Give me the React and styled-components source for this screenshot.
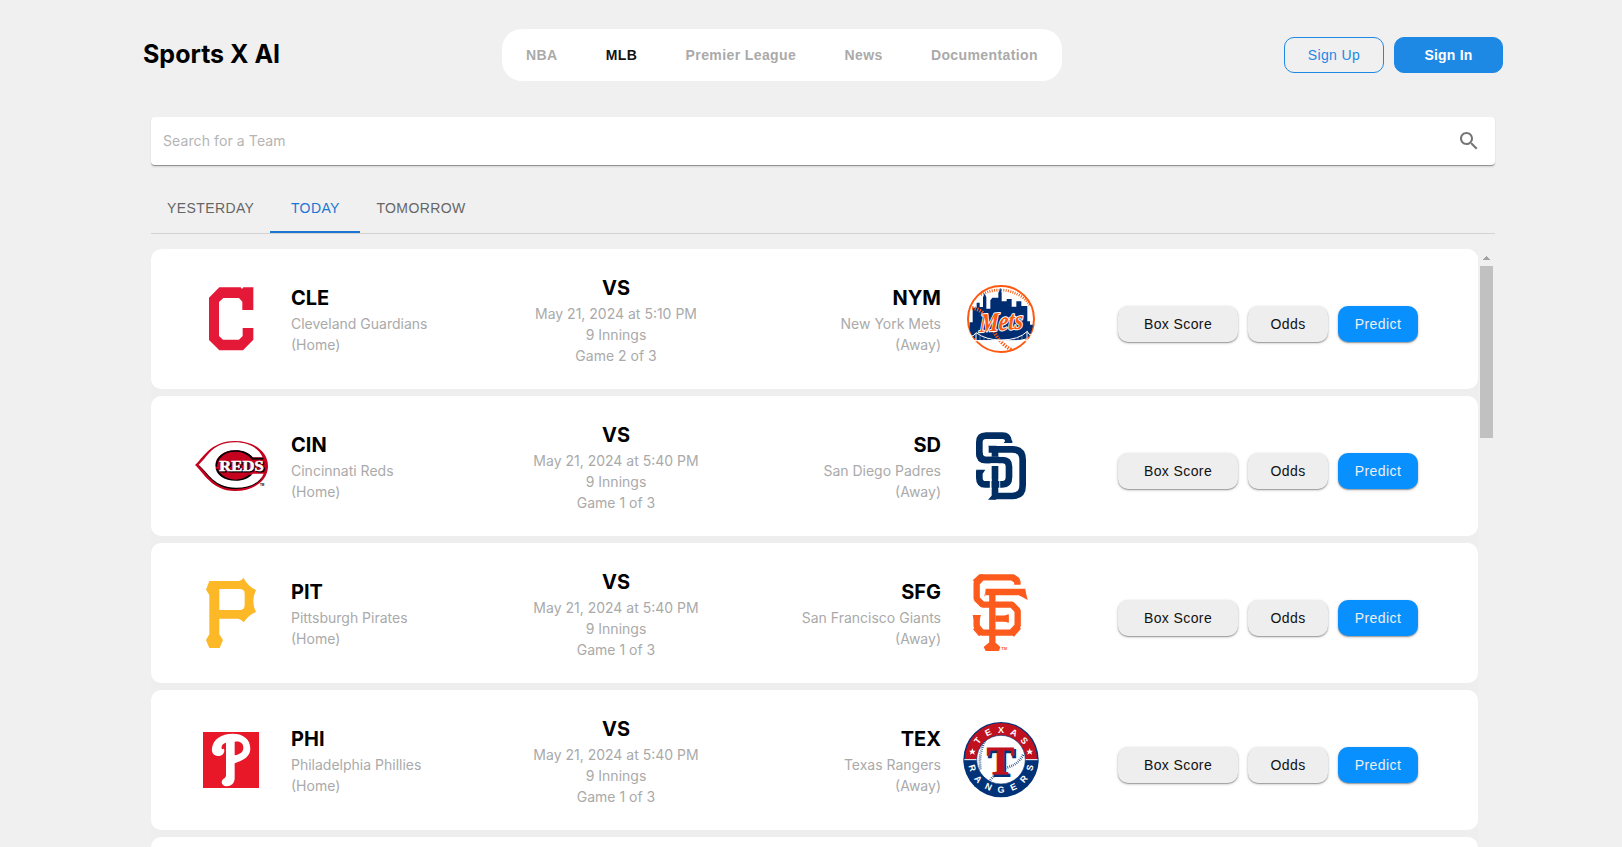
import React from "react";
import styled, { createGlobalStyle } from "styled-components";

const GlobalStyle = createGlobalStyle`
  * { box-sizing: border-box; }
  html, body { margin: 0; height: 100%; overflow: hidden; background: #f0f0f0; }
  button { font: inherit; letter-spacing: inherit; cursor: pointer; }
`;

const Page = styled.div`
  height: 100vh;
  padding-top: 29px;
  display: flex;
  flex-direction: column;
  overflow: hidden;
  font-family: "Liberation Sans", Arial, sans-serif;
  font-size: 14px;
  letter-spacing: 0.4px;
`;

const Header = styled.header`
  height: 52px;
  width: 1360px;
  margin-left: 143px;
  flex: none;
  display: grid;
  grid-template-columns: 359px 560px 1fr;
  align-items: center;
`;

const Brand = styled.h1`
  margin: 0;
  padding-bottom: 2px;
  font: 650 25px/36px Inter, sans-serif;
  letter-spacing: 0;
  color: #000;
`;

const Nav = styled.nav`
  height: 52px;
  padding: 0 24px;
  display: flex;
  align-items: center;
  justify-content: space-between;
  background: #fff;
  border-radius: 20px;
`;

const NavLink = styled.a`
  font-weight: 700;
  color: ${(p) => (p.$active ? "#111" : "#aaa")};
`;

const AuthActions = styled.div`
  display: flex;
  justify-content: flex-end;
  gap: 10px;
`;

const AuthButton = styled.button`
  width: ${(p) => (p.$filled ? 109 : 100)}px;
  height: 36px;
  padding: 0;
  border: 1px solid #1e88e5;
  border-radius: 10px;
  background: ${(p) => (p.$filled ? "#1e88e5" : "transparent")};
  color: ${(p) => (p.$filled ? "#fff" : "#1e88e5")};
  font-weight: ${(p) => (p.$filled ? 700 : 400)};
  letter-spacing: ${(p) => (p.$filled ? 0.2 : 0.4)}px;
`;

const Main = styled.main`
  width: 1344px;
  margin: 36px 0 0 151px;
  flex: 1;
  min-height: 0;
  display: flex;
  flex-direction: column;
`;

const SearchBar = styled.div`
  height: 49px;
  flex: none;
  padding: 0 14px 0 12px;
  display: flex;
  align-items: center;
  background: #fff;
  border-bottom: 1px solid #949494;
  border-radius: 4px;
  box-shadow: 0 1px 2px rgba(0, 0, 0, 0.12);

  svg { flex: none; fill: #757575; }
`;

const SearchInput = styled.input`
  flex: 1;
  padding: 0;
  border: 0;
  outline: 0;
  background: none;
  font: 400 14px/20px Inter, sans-serif;
  letter-spacing: 0.1px;

  &::placeholder { color: #b4b4b4; opacity: 1; }
`;

const Tabs = styled.div`
  height: 49px;
  flex: none;
  margin-top: 19px;
  display: flex;
  border-bottom: 1px solid #d3d3d3;
`;

const Tab = styled.button`
  min-width: 90px;
  height: 48px;
  padding: 0 16px;
  border: 0;
  border-bottom: 2px solid ${(p) => (p.$active ? "#1976d2" : "transparent")};
  background: none;
  color: ${(p) => (p.$active ? "#1976d2" : "#666")};
`;

const GamesPane = styled.section`
  margin-top: 15px;
  flex: 1;
  min-height: 0;
  display: flex;
`;

const GameList = styled.div`
  flex: 1;
  display: flex;
  flex-direction: column;
  gap: 7px;
  overflow: hidden;
  background: #eee;
  border-top-left-radius: 10px;
`;

const Scrollbar = styled.div`
  width: 17px;
  padding: 7px 2px 0;
  display: flex;
  flex-direction: column;
  align-items: center;
  gap: 6px;
`;

const ScrollThumb = styled.div`
  width: 13px;
  height: 172px;
  background: #c1c1c1;
`;

const GameCard = styled.article`
  height: 140px;
  flex: none;
  padding-left: 42px;
  display: grid;
  grid-template-columns: 325px 196px 325px 1fr;
  align-items: center;
  background: #fff;
  border-radius: 10px;
`;

const Side = styled.div`
  display: flex;
  flex-direction: ${(p) => (p.$away ? "row-reverse" : "row")};
  align-items: center;
  gap: 22px;
  text-align: ${(p) => (p.$away ? "right" : "left")};
`;

const Info = styled.div`
  font: 400 14px/21px Inter, sans-serif;
  letter-spacing: 0;
  color: #aaa;
  text-align: ${(p) => (p.$center ? "center" : "inherit")};
`;

const InfoTitle = styled.h2`
  margin: 0;
  font: 650 20px/30px Inter, sans-serif;
  color: #000;
`;

const GameActions = styled.div`
  margin: 10px 0 0 79px;
  display: flex;
  gap: 10px;
`;

const ActionButton = styled.button`
  width: ${(p) => (p.$wide ? 120 : 80)}px;
  height: 36px;
  padding: 0;
  border: 0;
  border-radius: 10px;
  background: ${(p) => (p.$primary ? "#0890ff" : "#eee")};
  color: ${(p) => (p.$primary ? "#eee" : "#111")};
  box-shadow: 0 1px 1px rgba(0, 0, 0, 0.25), 0 1px 3px rgba(0, 0, 0, 0.25);
`;

const Logo = styled.svg`
  width: 76px;
  height: 76px;
  flex: none;
  overflow: visible;
  letter-spacing: 0;
`;

const Cleveland = () => (
  <Logo viewBox="159 123 228 228">
    <path fill="#e31937" d="M207 173 238 142H302L306 147 310 142H340V210H307V185L297 174H250L237 186V288L249 299H297L308 288V264H340V299L309 331H238L207 300Z" />
  </Logo>
);

const Reds = () => (
  <Logo viewBox="39 24 228 228">
    <path fill="#c6011f" d="M45 135C68 116 90 64 164 63C224 63 264 96 264 138C264 183 220 213 165 213C94 213 68 154 45 135Z" />
    <path fill="#000" d="M57 137C82 158 100 207 166 207C204 207 232 193 243 176L231 168Z" />
    <path fill="#fff" d="M56 134C82 113 96 67 164 67C211 67 237 87 248 112H218C207 98 188 91 165 91C131 91 106 111 106 137C106 164 133 182 167 182C190 182 207 175 218 161H251C240 187 211 203 168 203C103 203 85 159 56 134Z" />
    <path fill="#000" d="M107 137C107 109 134 91 165 91C191 91 207 99 219 113H250V119H216C202 104 188 96 165 96C137 96 113 113 111 142Z" />
    <ellipse cx="166" cy="137" rx="53" ry="42" fill="#c6011f" />
    <path fill="#c6011f" d="M190 119H258L262 144 252 159H190Z" />
    <g fontFamily="Liberation Serif, serif" fontWeight="700" fontSize="43">
      <text x="121" y="156" textLength="133" lengthAdjust="spacingAndGlyphs" fill="#000" stroke="#000" strokeWidth="2.5">REDS</text>
      <text x="118" y="153" textLength="133" lengthAdjust="spacingAndGlyphs" fill="#fff" stroke="#fff" strokeWidth="1.5">REDS</text>
    </g>
    <text x="240" y="199" fontFamily="Liberation Sans, sans-serif" fontWeight="700" fontSize="9">TM</text>
  </Logo>
);

const Pirates = () => (
  <Logo viewBox="9 45 228 228">
    <path fill="#fdb827" fillRule="evenodd" d="M58 63H147Q156 61 160 53Q174 79 198 90Q190 107 190 123Q190 141 198 156Q178 163 161 187Q154 178 145 176H88V223L99 240 89 264H58L48 240 58 223V105L48 89ZM88 87V150H149Q164 150 164 136V101Q164 87 149 87Z" />
  </Logo>
);

const Phillies = () => (
  <Logo viewBox="9 486 228 228">
    <rect x="39" y="516" width="168" height="168" fill="#e81828" />
    <path fill="#fff" fillRule="evenodd" d="M128 521C162 521 181 540 181 565C181 590 162 600 134 610V655C134 670 123 679 110 679C98 679 93 671 96 662C99 655 108 656 108 645V548C97 551 92 559 96 568Q103 563 103 572C102 583 93 589 83 588C70 587 64 577 66 565C69 538 94 521 128 521ZM134 545V586C151 583 160 575 160 563C160 549 150 542 134 545Z" />
  </Logo>
);

const Mets = () => (
  <Logo viewBox="39 33 228 228">
    <circle cx="153" cy="147" r="99" fill="#fff" stroke="#ff5910" strokeWidth="6" />
    <path fill="#002d72" d="M59 180V157H68V113H80V98H89V111H99V82L104 70 109 82V116H121V91L127 83H145V69L151 53 155 69V94H170V87H185V110H199V94H214V108H232V154H240V164H249Q247 187 232 205Q195 215 153 211H80Q64 197 59 180Z" />
    <path fill="none" stroke="#ff5910" strokeWidth="8" strokeDasharray="3 4" d="M92 74Q155 44 212 78Q232 91 241 108" />
    <path fill="none" stroke="#ff5910" strokeWidth="11" strokeDasharray="4 4" d="M66 114Q94 116 110 145M132 184Q150 222 186 240" />
    <path fill="none" stroke="#fff" strokeWidth="3" d="M61 212H244M78 190V214M231 184V214M59 201Q75 197 78 188Q108 210 153 210Q206 210 232 184Q235 195 246 196" />
    <path fill="none" stroke="#fff" strokeWidth="1" d="M90 197V212M102 202V212M114 205V212M126 207V212M180 207V212M192 204V212M204 201V212M216 195V212" />
    <g transform="rotate(-5 153 160) skewX(-8)">
      <text x="110" y="181" textLength="132" lengthAdjust="spacingAndGlyphs" fontFamily="Liberation Serif, serif" fontStyle="italic" fontWeight="700" fontSize="80" fill="#ff5910" stroke="#fff" strokeWidth="6" strokeLinejoin="round" paintOrder="stroke">Mets</text>
    </g>
  </Logo>
);

const Padres = () => (
  <Logo viewBox="39 24 228 228" fill="none" stroke="#002d62" strokeWidth="20">
    <path d="M176 69V65Q174 47 158 47H108Q88 47 88 67V98Q88 120 108 120H157Q177 120 177 140V171Q177 193 157 193H106Q88 193 88 173V151" />
    <path stroke="#fff" strokeWidth="30" d="M135 106V88H185" />
    <path d="M116 88H187Q218 88 218 120V196Q218 228 187 228H135V138M135 110V88" />
    <path fill="#002d62" stroke="none" d="M166 62H187V69H161ZM114 77H140L128 97 123 83ZM125 227L114 239H140ZM77 149H106L98 161Z" />
    <path d="M88 98Q88 120 108 120H145" />
    <path stroke="#fff" strokeWidth="5" d="M145 132H121M148 177V207M122 177V207M148 108H180Q197 110 197 132" />
    <path d="M126 193H148" />
  </Logo>
);

const Giants = () => (
  <Logo viewBox="39 465 228 228">
    <g fill="none" stroke="#fd5a1e" strokeWidth="19" strokeLinejoin="bevel">
      <path d="M202 494V483L187 472H96L80 489V536L98 554H186L203 572V618L184 638H96L80 619V587" />
      <path stroke="#fff" strokeWidth="29" d="M127 535V516H190" />
      <path d="M107 516H226M127 516V680M137 596H176" />
    </g>
    <path fill="#fd5a1e" d="M88 463 98 462 90 475 72 487 69 480ZM190 462 207 473 212 493 192 487ZM220 507H225L233 540 207 526ZM107 507V525L103 530ZM176 582V609L164 604V587ZM68 585H93L89 598H71ZM116 668H137L151 681 147 693H107L101 681ZM69 628 87 649 98 642 78 620ZM213 626 192 650 180 642 206 620Z" />
    <text x="154" y="690" fill="#fd5a1e" fontFamily="Liberation Sans, sans-serif" fontWeight="700" fontSize="12">TM</text>
  </Logo>
);

const ringLetters = (word, start, step, radius, flip) =>
  word.split("").map((letter, i) => {
    const angle = start + step * i;
    const rad = (angle * Math.PI) / 180;
    const x = 153 + radius * Math.sin(rad);
    const y = 149 - radius * Math.cos(rad);
    return (
      <text key={i} transform={`translate(${x} ${y}) rotate(${flip ? angle + 180 : angle})`} y="9">
        {letter}
      </text>
    );
  });

const Rangers = () => (
  <Logo viewBox="39 36 228 228">
    <circle cx="153" cy="149" r="113" fill="#003278" />
    <path fill="#c0111f" d="M45 147A108 108 0 0 1 261 147Z" />
    <path stroke="#fff" strokeWidth="3" d="M43 149H263" />
    <circle cx="153" cy="149" r="73" fill="#fff" stroke="#003278" strokeWidth="2" />
    <g fill="none" stroke="#003278" strokeWidth="8" strokeDasharray="2 4">
      <path d="M104 94Q84 137 92 181M121 210Q131 197 144 188M166 174Q205 165 220 133" />
    </g>
    <g fontFamily="Liberation Serif, serif" fontWeight="700" fontSize="123" textAnchor="middle">
      <text x="156" y="198" fill="#003278" stroke="#003278" strokeWidth="6">T</text>
      <text x="151" y="193" fill="#c0111f" stroke="#c0111f" strokeWidth="3">T</text>
    </g>
    <g fill="#fff" fontFamily="Liberation Sans, sans-serif" fontWeight="700" fontSize="27" textAnchor="middle">
      {ringLetters("TEXAS", -51, 25.5, 90, false)}
      {ringLetters("RANGERS", -106, -24.7, 90, true)}
    </g>
    <g fill="#fff">
      <path d="M67 115 70 122H77L72 127 74 134 67 130 60 134 62 127 57 122H64Z" />
      <path d="M239 115 242 122H249L244 127 246 134 239 130 232 134 234 127 229 122H236Z" />
    </g>
  </Logo>
);

const games = [
  { home: ["CLE", "Cleveland Guardians", Cleveland], away: ["NYM", "New York Mets", Mets], time: "5:10 PM", game: 2 },
  { home: ["CIN", "Cincinnati Reds", Reds], away: ["SD", "San Diego Padres", Padres], time: "5:40 PM", game: 1 },
  { home: ["PIT", "Pittsburgh Pirates", Pirates], away: ["SFG", "San Francisco Giants", Giants], time: "5:40 PM", game: 1 },
  { home: ["PHI", "Philadelphia Phillies", Phillies], away: ["TEX", "Texas Rangers", Rangers], time: "5:40 PM", game: 1 },
];

const Team = ({ team: [code, name, Mark], away }) => (
  <Side $away={away}>
    <Mark />
    <Info>
      <InfoTitle>{code}</InfoTitle>
      <div>{name}</div>
      <div>{away ? "(Away)" : "(Home)"}</div>
    </Info>
  </Side>
);

export default function App() {
  return (
    <>
      <GlobalStyle />
      <Page>
        <Header>
          <Brand>Sports X AI</Brand>
          <Nav>
            {["NBA", "MLB", "Premier League", "News", "Documentation"].map((item) => (
              <NavLink key={item} $active={item === "MLB"}>{item}</NavLink>
            ))}
          </Nav>
          <AuthActions>
            <AuthButton>Sign Up</AuthButton>
            <AuthButton $filled>Sign In</AuthButton>
          </AuthActions>
        </Header>
        <Main>
          <SearchBar>
            <SearchInput placeholder="Search for a Team" />
            <svg width="24" height="24" viewBox="0 0 24 24">
              <path d="M15.5 14h-.79l-.28-.27C15.41 12.59 16 11.11 16 9.5 16 5.91 13.09 3 9.5 3S3 5.91 3 9.5 5.91 16 9.5 16c1.61 0 3.09-.59 4.23-1.57l.27.28v.79l5 4.99L20.49 19zm-6 0C7.01 14 5 11.99 5 9.5S7.01 5 9.5 5 14 7.01 14 9.5 11.99 14 9.5 14" />
            </svg>
          </SearchBar>
          <Tabs>
            <Tab>YESTERDAY</Tab>
            <Tab $active>TODAY</Tab>
            <Tab>TOMORROW</Tab>
          </Tabs>
          <GamesPane>
            <GameList>
              {games.map((g) => (
                <GameCard key={g.home[0]}>
                  <Team team={g.home} />
                  <Info $center>
                    <InfoTitle>VS</InfoTitle>
                    <div>May 21, 2024 at {g.time}</div>
                    <div>9 Innings</div>
                    <div>Game {g.game} of 3</div>
                  </Info>
                  <Team team={g.away} away />
                  <GameActions>
                    <ActionButton $wide>Box Score</ActionButton>
                    <ActionButton>Odds</ActionButton>
                    <ActionButton $primary>Predict</ActionButton>
                  </GameActions>
                </GameCard>
              ))}
              <GameCard />
            </GameList>
            <Scrollbar>
              <svg width="7" height="4" viewBox="0 0 7 4" fill="#a3a3a3">
                <path d="M3 0H4V1H5V2H6V3H7V4H0V3H1V2H2V1H3Z" />
              </svg>
              <ScrollThumb />
            </Scrollbar>
          </GamesPane>
        </Main>
      </Page>
    </>
  );
}
